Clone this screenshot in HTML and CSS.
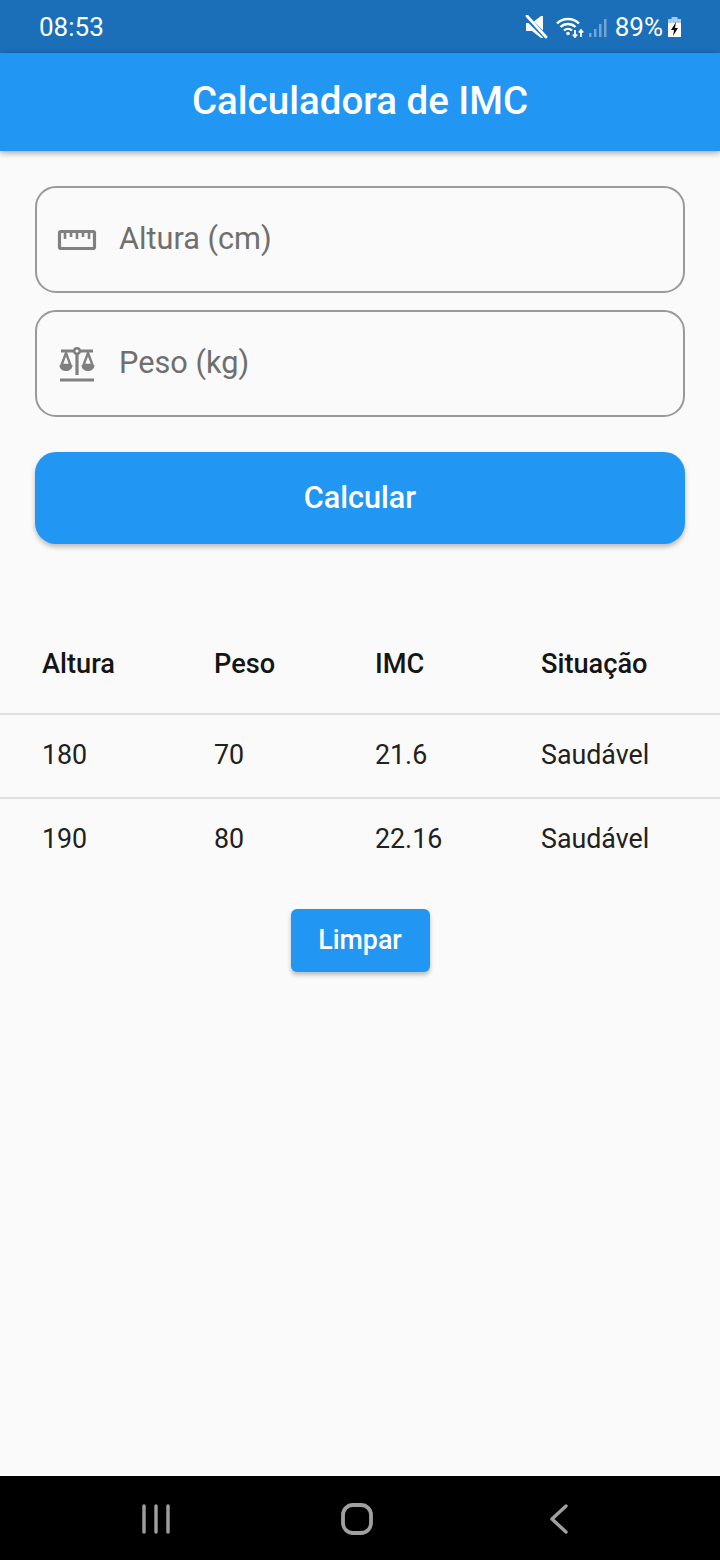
FILE: index.html
```html
<!DOCTYPE html>
<html lang="pt">
<head>
    <meta charset="UTF-8">
    <meta name="viewport" content="width=device-width, initial-scale=1.0">
    <title>Calculadora de IMC</title>
    <link rel="stylesheet" href="styles.css">
</head>
<body>
    <div class="status-bar">
        <span class="clock">08:53</span>
        <div class="status-icons">
            <svg class="icon-mute" width="24" height="24" viewBox="0 0 24 24">
                <path d="M1 8h6l9-7h2v22h-2l-9-7H1z" fill="#fff"/>
                <path d="M1 2l20 20" stroke="#1a6fb8" stroke-width="5"/>
                <path d="M2 1l19 21" stroke="#fff" stroke-width="2.800" stroke-linecap="round"/>
            </svg>
            <svg class="icon-wifi" width="30" height="24" viewBox="0 0 30 24" fill="none">
                <path d="M2 8.500C8 2.500 18 2.500 24 8.500" stroke="#fff" stroke-width="2.400"/>
                <path d="M5.500 12C9.500 8 16.500 8 20.500 12" stroke="#fff" stroke-width="2.400"/>
                <path d="M9 15.500c2.300-2.200 5.700-2.200 8 0" stroke="#fff" stroke-width="2.400"/>
                <circle cx="13" cy="18.500" r="1.800" fill="#fff"/>
                <path d="M20 15v7M17.800 19.500l2.200 2.500 2.200-2.500M26 22v-7M23.800 17.500l2.200-2.500 2.200 2.500" stroke="#fff" stroke-width="1.800"/>
            </svg>
            <svg class="icon-signal" width="20" height="24" viewBox="0 0 20 24" fill="#6fa6d6">
                <rect x="1" y="18" width="2.500" height="4"/>
                <rect x="6" y="14" width="2.500" height="8"/>
                <rect x="11" y="9" width="2.500" height="13"/>
                <rect x="16" y="4" width="2.500" height="18"/>
            </svg>
            <span class="battery-text">89%</span>
            <svg class="icon-battery" width="15" height="24" viewBox="0 0 15 24">
                <rect x="4.500" y="2" width="6" height="3" fill="#a9c9e6"/>
                <rect x="1" y="4" width="13" height="4" fill="#a9c9e6"/>
                <rect x="1" y="8" width="13" height="14" fill="#fff"/>
                <path d="M9 7L4 15h3L6 21l5-8H8z" fill="#111"/>
            </svg>
        </div>
    </div>

    <header class="app-bar">Calculadora de IMC</header>

    <main class="content">
        <form class="imc-form">
            <label class="field">
                <svg class="field-icon" width="40" height="24" viewBox="0 0 40 24" fill="none" stroke="#808080">
                    <rect x="2.500" y="3.500" width="35" height="17" rx="1.500" stroke-width="3.200"/>
                    <path d="M8 5v6M14 5v4M20 5v6M26 5v4M32 5v6" stroke-width="2.600"/>
                </svg>
                <span class="placeholder">Altura (cm)</span>
            </label>
            <label class="field">
                <svg class="field-icon" width="40" height="36" viewBox="0 0 40 36" fill="none" stroke="#808080">
                    <circle cx="20" cy="5" r="2.800" stroke-width="2.400"/>
                    <path d="M20 8v21" stroke-width="3.200"/>
                    <path d="M4 5h13M23 5h13" stroke-width="3"/>
                    <path d="M3 34h34" stroke-width="3.200"/>
                    <path d="M9 7L4.500 19h9zM31 7l-4.500 12h9z" stroke-width="2.400"/>
                    <path d="M2.500 19h13c0 8-13 8-13 0zM24.500 19h13c0 8-13 8-13 0z" fill="#808080" stroke="none"/>
                </svg>
                <span class="placeholder">Peso (kg)</span>
            </label>
            <button type="button" class="btn-primary">Calcular</button>
        </form>

        <table class="results">
            <thead>
                <tr>
                    <th class="col-altura">Altura</th>
                    <th class="col-peso">Peso</th>
                    <th class="col-imc">IMC</th>
                    <th>Situação</th>
                </tr>
            </thead>
            <tbody>
                <tr>
                    <td>180</td>
                    <td>70</td>
                    <td>21.6</td>
                    <td>Saudável</td>
                </tr>
                <tr>
                    <td>190</td>
                    <td>80</td>
                    <td>22.16</td>
                    <td>Saudável</td>
                </tr>
            </tbody>
        </table>

        <button type="button" class="btn-small">Limpar</button>
    </main>

    <nav class="nav-bar">
        <svg width="30" height="30" viewBox="0 0 30 30" fill="none" stroke="#a0a0a0" stroke-width="3.400" stroke-linecap="round">
            <path d="M3 2v26M15 2v26M27 2v26"/>
        </svg>
        <svg class="nav-home" width="32" height="32" viewBox="0 0 32 32" fill="none" stroke="#a0a0a0" stroke-width="3.800">
            <rect x="2" y="2" width="28" height="28" rx="10"/>
        </svg>
        <svg width="20" height="30" viewBox="0 0 20 30" fill="none" stroke="#a0a0a0" stroke-width="3.400" stroke-linecap="round" stroke-linejoin="round">
            <path d="M17 2L3 15l14 13"/>
        </svg>
    </nav>
</body>
</html>
```

FILE: styles.css
```css
* {
    box-sizing: border-box;
}

body {
    font-family: Roboto, sans-serif;
    background-color: #fafafa;
    display: flex;
    flex-direction: column;
    height: 1560px;
    margin: 0;
    overflow: hidden;
}

.status-bar {
    height: 53px;
    flex-shrink: 0;
    background-color: #1a6fb8;
    color: #fff;
    display: flex;
    align-items: center;
    justify-content: space-between;
    padding: 0 38px 0 39px;
    font-size: 26px;
}

.status-icons {
    display: flex;
    align-items: center;
}

.icon-mute {
    margin-right: 6px;
}

.icon-signal {
    margin: 0 4px 0 3px;
}

.battery-text {
    margin-left: 3px;
    margin-right: 4px;
}

.app-bar {
    height: 98px;
    flex-shrink: 0;
    padding-bottom: 4px;
    background-color: #2196f3;
    color: #fff;
    font-size: 38.500px;
    font-weight: 500;
    display: flex;
    align-items: center;
    justify-content: center;
    box-shadow: 0 2px 6px rgba(0, 0, 0, 0.35);
    position: relative;
}

.content {
    flex: 1;
    display: flex;
    flex-direction: column;
    align-items: center;
}

.imc-form {
    width: 100%;
    padding: 35px 35px 0;
    display: flex;
    flex-direction: column;
    gap: 17px;
}

.field {
    height: 107px;
    border: 2px solid #9a9a9a;
    border-radius: 21px;
    display: flex;
    align-items: center;
    padding-left: 20px;
}

.field-icon {
    flex-shrink: 0;
}

.placeholder {
    margin-left: 22px;
    padding-bottom: 3px;
    font-size: 30.700px;
    color: #6f6f6f;
}

.btn-primary {
    margin-top: 18px;
    height: 92px;
    padding-bottom: 3px;
    background-color: #2196f3;
    color: #fff;
    border: none;
    border-radius: 21px;
    font-family: inherit;
    font-size: 30.600px;
    font-weight: 500;
    box-shadow: 0 3px 5px rgba(0, 0, 0, 0.25);
}

.results {
    width: 100%;
    margin-top: 72px;
    border-collapse: collapse;
    font-size: 26.800px;
    text-align: left;
    color: #212121;
}

.results th {
    height: 98px;
    padding: 0 0 2px 42px;
    font-size: 27.200px;
    font-weight: 500;
    color: #151515;
}

.results td {
    height: 84px;
    padding: 0 0 3px 42px;
    border-top: 2px solid #dedede;
}

.col-altura {
    width: 214px;
}

.col-peso {
    width: 161px;
}

.col-imc {
    width: 166px;
}

.results th:nth-child(n+2),
.results td:nth-child(n+2) {
    padding-left: 0;
}

.btn-small {
    margin-top: 27px;
    width: 139px;
    height: 63px;
    padding-bottom: 3px;
    background-color: #2196f3;
    color: #fff;
    border: none;
    border-radius: 6px;
    font-family: inherit;
    font-size: 26.800px;
    font-weight: 500;
    box-shadow: 0 3px 4px rgba(0, 0, 0, 0.25);
}

.nav-bar {
    height: 84px;
    flex-shrink: 0;
    background-color: #000;
    display: flex;
    align-items: center;
    padding: 2px 151px 0 141px;
    justify-content: space-between;
}

.nav-home {
    margin-right: 6px;
}
```
